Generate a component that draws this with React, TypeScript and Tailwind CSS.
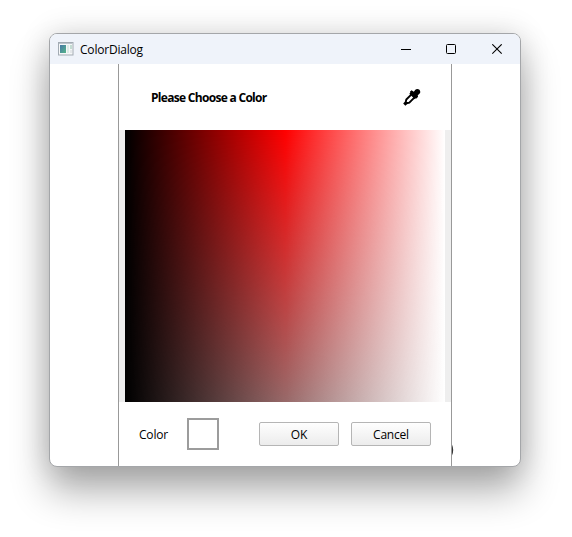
import React from "react";

function AppIcon() {
  return (
    <svg className="block h-[14px] w-4" viewBox="0 0 16 14" aria-hidden="true">
      <defs>
        <linearGradient id="screen" x1="0" y1="0" x2="1" y2="1">
          <stop offset="0" stopColor="#4777a6" />
          <stop offset="1" stopColor="#55b58a" />
        </linearGradient>
      </defs>
      <rect x=".5" y=".5" width="14.5" height="12.5" fill="#f5f7f8" stroke="#a3abb3" />
      <path d="M1 1.5h13.5" stroke="#bcc4cc" />
      <rect x="2" y="3" width="6" height="8" fill="url(#screen)" />
      <rect x="9" y="3" width="2" height="8" fill="#dcebe6" />
      <rect x="12" y="3" width="2" height="4" fill="#c3dcd2" />
      <rect x="12" y="8" width="2" height="3" fill="#e4e7ea" />
    </svg>
  );
}

function TitleBar() {
  return (
    <header className="flex h-[30px] shrink-0 items-center bg-[#eff3fa] pl-2">
      <AppIcon />
      <span className="ml-[6px] flex-1 pt-px text-[12px] leading-[16px] tracking-[-0.2px]">ColorDialog</span>
      <div className="flex h-full">
        <button className="grid w-[45px] place-items-center" aria-label="Minimize">
          <svg width="11" height="11" viewBox="0 0 11 11">
            <path d="M0 5.500h10" stroke="#000" />
          </svg>
        </button>
        <button className="grid w-[45px] place-items-center" aria-label="Maximize">
          <svg width="11" height="11" viewBox="0 0 11 11" fill="none">
            <rect x=".5" y=".5" width="9" height="9" rx="1" stroke="#000" />
          </svg>
        </button>
        <button className="grid w-[46px] place-items-center" aria-label="Close">
          <svg width="11" height="11" viewBox="0 0 11 11">
            <path d="M.3 .3l9.400 9.400M9.700 .3l-9.400 9.400" stroke="#000" strokeWidth="1.1" />
          </svg>
        </button>
      </div>
    </header>
  );
}

function Eyedropper() {
  return (
    <svg className="block" width="18" height="18" viewBox="0 0 18 18" aria-hidden="true">
      <path d="M9 5.900 3.300 11.600 2.700 14.200l-1.200 1.300.9.900 1.300-1.200 2.600-.6 5.800-5.800" fill="#fff" stroke="#000" strokeWidth="1.900" />
      <path
        d="M10.800 3.800c1.200-1.300 1.800-2.700 3.500-2.700 1.700 0 3 1.300 3 3 0 1.600-1.400 2.200-2.600 3.400l.4 1.300-1.600 1.600-.8-.2-.9 1-5.500-5.500 1-.9-.4-1 1.600-1.500z"
        fill="#000"
      />
    </svg>
  );
}

function ColorField() {
  return (
    <div className="flex h-[272px] justify-center bg-[#eeeeee]">
      <div className="h-full w-[320px] bg-[linear-gradient(to_right,#000,#f00_50%,#fff)]">
        <div className="h-full bg-[linear-gradient(to_right,#000,#808080_50%,#fff)] [mask-image:linear-gradient(to_bottom,transparent,rgba(0,0,0,0.82))]" />
      </div>
    </div>
  );
}

function PushButton({ children }: { children: React.ReactNode }) {
  return (
    <button className="h-6 w-20 rounded-[2px] border border-[#b5b5b5] bg-linear-to-b from-[#fefefe] to-[#ececec] pt-[2px] text-[12px] leading-[16px] tracking-[-0.2px]">
      {children}
    </button>
  );
}

export default function App() {
  return (
    <main className="h-[537px] w-[572px] overflow-hidden bg-white pl-[49px] pt-[33px] font-['Open_Sans','Noto_Sans',sans-serif] text-black">
      <div className="flex h-[434px] w-[472px] flex-col overflow-hidden rounded-[8px] border border-[#a4a6a9] bg-white shadow-[0_24px_38px_rgba(0,0,0,0.32),0_0_30px_rgba(0,0,0,0.14)]">
        <TitleBar />
        <div className="flex flex-1 pl-[68px]">
          <section className="flex w-[334px] flex-col border-x border-[#999999]">
            <div className="flex h-[66px] items-center justify-between pl-8 pr-[30px]">
              <h1 className="pt-[2px] text-[12px] font-bold leading-[16px] tracking-[-0.7px]">Please Choose a Color</h1>
              <Eyedropper />
            </div>
            <ColorField />
            <footer className="flex h-16 items-center pl-5">
              <span className="w-12 pt-[2px] text-[12px] leading-[16px] tracking-[-0.2px]">Color</span>
              <div className="size-8 border-2 border-[#9c9c9c] bg-white" />
              <div className="ml-10 flex gap-3">
                <PushButton>OK</PushButton>
                <PushButton>Cancel</PushButton>
              </div>
            </footer>
          </section>
          <div className="flex flex-1 items-end pb-[8px]">
            <svg width="2" height="16" viewBox="0 0 2 16">
              <path d="M-.5 3Q1.700 8 -.5 13" stroke="#333" strokeWidth="1.200" fill="none" />
            </svg>
          </div>
        </div>
      </div>
    </main>
  );
}
